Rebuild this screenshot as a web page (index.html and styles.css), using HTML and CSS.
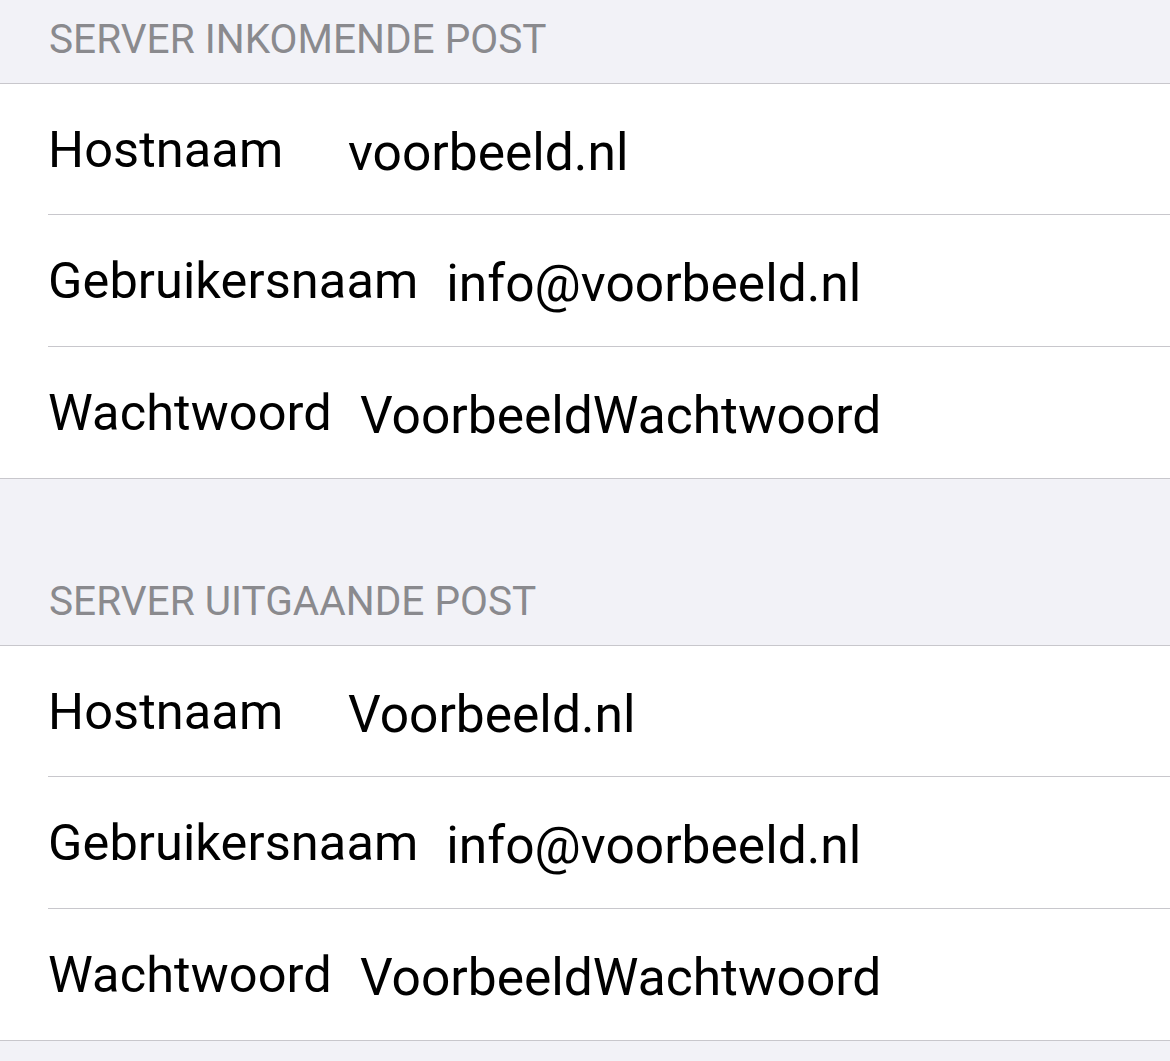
FILE: index.html
```html
<!DOCTYPE html>
<html lang="nl">
<head>
    <meta charset="UTF-8">
    <meta name="viewport" content="width=device-width, initial-scale=1.0">
    <title>Mailinstellingen</title>
    <link rel="stylesheet" href="styles.css">
</head>
<body>
    <div class="settings">
        <div class="section-header">SERVER INKOMENDE POST</div>
        <div class="group">
            <div class="row">
                <span class="label">Hostnaam</span>
                <span class="value">voorbeeld.nl</span>
            </div>
            <div class="row">
                <span class="label">Gebruikersnaam</span>
                <span class="value">info@voorbeeld.nl</span>
            </div>
            <div class="row">
                <span class="label">Wachtwoord</span>
                <span class="value">VoorbeeldWachtwoord</span>
            </div>
        </div>

        <div class="section-header spaced">SERVER UITGAANDE POST</div>
        <div class="group">
            <div class="row">
                <span class="label">Hostnaam</span>
                <span class="value">Voorbeeld.nl</span>
            </div>
            <div class="row">
                <span class="label">Gebruikersnaam</span>
                <span class="value">info@voorbeeld.nl</span>
            </div>
            <div class="row">
                <span class="label">Wachtwoord</span>
                <span class="value">VoorbeeldWachtwoord</span>
            </div>
        </div>
    </div>
</body>
</html>
```

FILE: styles.css
```css
:root {
    --bg-grouped: #f2f2f7;
    --bg-cell: #ffffff;
    --separator: #c8c7cc;
    --text-primary: #000000;
    --text-secondary: #8a8a8e;
}
body {
    font-family: Roboto, "Liberation Sans", sans-serif;
    background-color: var(--bg-grouped);
    color: var(--text-primary);
    margin: 0;
    padding: 0;
}
.settings {
    display: flex;
    flex-direction: column;
    min-height: 1061px;
}
.section-header {
    height: 83px;
    box-sizing: border-box;
    display: flex;
    align-items: flex-end;
    padding: 0 0 23px 49px;
    font-size: 40.6px;
    line-height: 1;
    color: var(--text-secondary);
}
.section-header.spaced {
    height: 166px;
}
.group {
    background-color: var(--bg-cell);
    border-top: 1px solid var(--separator);
    border-bottom: 1px solid var(--separator);
}
.row {
    height: 132px;
    box-sizing: border-box;
    margin-left: 48px;
    padding-top: 41px;
    display: flex;
    align-items: flex-start;
    border-bottom: 1px solid var(--separator);
}
.row:first-child {
    height: 131px;
}
.row:last-child {
    height: 131px;
    border-bottom: none;
}
.label {
    min-width: 272px;
    margin-right: 28px;
    font-size: 50.5px;
    line-height: 1;
    letter-spacing: 0.1px;
    white-space: nowrap;
}
.value {
    padding-top: 2px;
    font-size: 51.5px;
    line-height: 1;
    white-space: nowrap;
}
```
